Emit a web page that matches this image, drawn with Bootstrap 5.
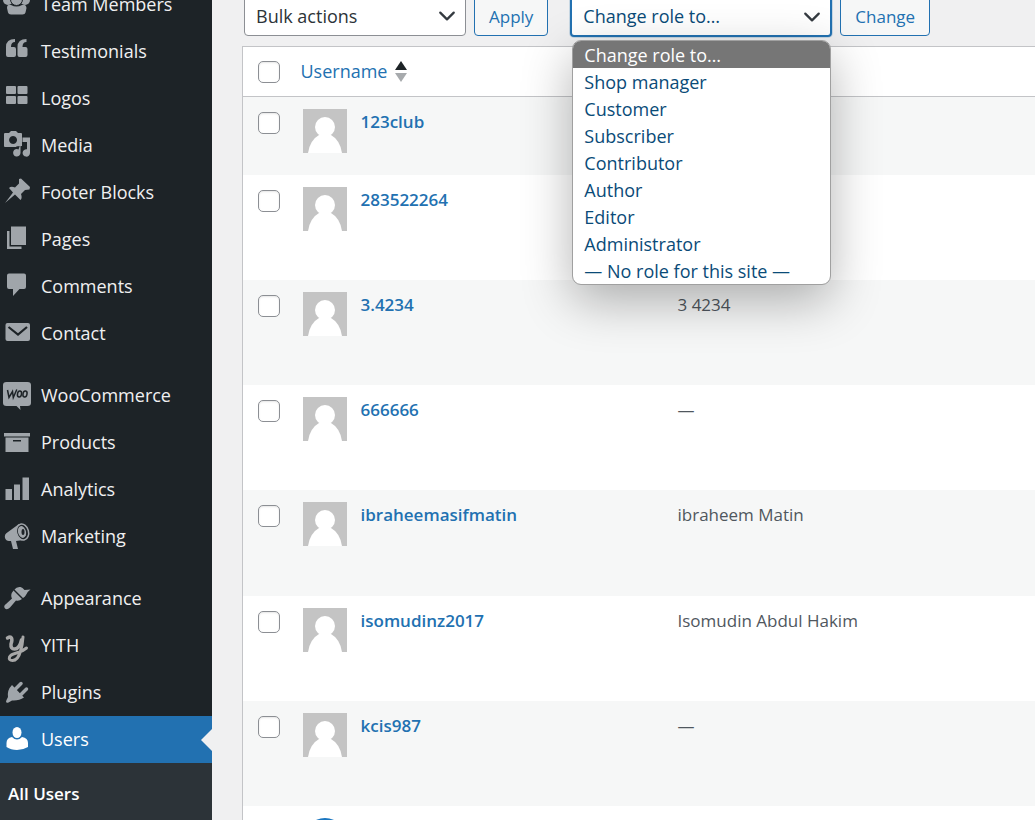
<!DOCTYPE html>
<html lang="en">
<head>
<meta charset="utf-8">
<meta name="viewport" content="width=device-width, initial-scale=1">
<title>Users</title>
<link href="https://cdn.jsdelivr.net/npm/bootstrap@5.3.0/dist/css/bootstrap.min.css" rel="stylesheet">
<style>
  body { font-family: "Open Sans", "Noto Sans", sans-serif; font-size: 17px; line-height: 27px; background: #f0f0f1; color: #50575e; }
  .app-shell { height: 100vh; overflow: hidden; }
  .side-menu { width: 212px; background: #1d2327; font-size: 18px; }
  .side-scroll { margin-top: -19px; min-height: calc(100% + 19px); }
  .side-menu .nav-link { height: 47px; padding: 0 0 0 3px; gap: 10px; color: #f0f0f1; font-size: 18px; }
  .side-menu svg { width: 28px; height: 28px; margin-bottom: 6px; flex: none; fill: #a0a5aa; overflow: visible; }
  .menu-gap { height: 15px; }
  .side-menu .nav-link.active { background: #2271b1; color: #fff; }
  .side-menu .nav-link.active svg { fill: #fff; }
  .nav-link.active::after { content: ""; position: absolute; right: 0; top: 13px; border: 11px solid transparent; border-left: 0; border-right-color: #f0f0f1; }
  .sub-menu { background: #2c3338; padding: 17px 8px; font-size: 17px; }
  .sub-menu a { color: #fff; font-weight: 600; text-decoration: none; }
  .page-main { padding-left: 30px; }
  .tool-row { margin-top: -4px; padding-left: 2px; gap: 8px; }
  .tool-row .form-select { height: 40px; padding: 0 44px 0 11px; border-color: #8c8f94; border-radius: 4px; color: #2c3338; font-size: 18px; background-position: right 9px center; background-size: 18px 18px; }
  .bulk-pick { width: 222px; }
  .role-pick { width: 262px; margin-left: 14px; }
  .tool-row .role-pick .form-select { height: 41px; border: 2px solid #2271b1; color: #0a4b78; box-shadow: 0 0 0 1px #2271b133; }
  .btn-wp { height: 40px; padding: 0 14px; border: 1px solid #2271b1; border-radius: 4px; background: #f6f7f7; color: #2271b1; font-size: 17px; }
  .role-pick .dropdown-menu { display: block; top: 44px; left: 2px; width: 259px; padding: 0; overflow: hidden; border: 1px solid #a0a0a0; border-radius: 9px; box-shadow: 0 16px 50px rgba(0,0,0,.3); font-size: 18px; }
  .role-pick .dropdown-item { height: 27px; padding: 0 11px; line-height: 28px; color: #0a4b78; }
  .role-pick .dropdown-item.active { background: #767676; color: #fff; }
  .user-table { margin: 9px 0 0; border: 1px solid #c3c4c7; border-right: 0; table-layout: fixed; color: #50575e; background: #fff; }
  .user-table > :not(caption) > * > * { padding: 0 0 0 10px; border: 0; background: transparent; color: inherit; box-shadow: none; font-weight: 400; }
  .user-table thead tr { height: 50px; border-bottom: 1px solid #c3c4c7; font-size: 18px; }
  .user-table tbody tr { height: 105px; }
  .user-table tbody tr:nth-child(5) { height: 106px; }
  .user-table tbody tr.short-row { height: 78px; }
  .user-table tbody tr:nth-child(odd) { background: #f6f7f7; }
  .user-table tbody > tr > td { padding-top: 11px; }
  .col-pick { width: 50px; }
  .col-user { width: 375px; }
  .user-table .form-check-input { display: block; width: 22px; height: 22px; margin: 0 0 0 5px; border: 1px solid #8c8f94; border-radius: 5px; background-color: #fff; box-shadow: inset 0 1px 2px rgba(0,0,0,.1); }
  .user-table tbody .form-check-input { margin-top: 4px; }
  .user-table a { color: #2271b1; text-decoration: none; }
  .user-cell { gap: 14px; }
  .user-link { font-weight: 600; }
  .avatar-pic { width: 44px; height: 44px; flex: none; margin-top: 1px; }
  .sort-link { gap: 8px; margin-left: -2px; }
</style>
</head>
<body>
<div class="app-shell d-flex">
  <nav class="side-menu flex-shrink-0" aria-label="Admin menu">
    <div class="side-scroll nav flex-column flex-nowrap">
      <a class="nav-link d-flex align-items-center" href="#"><svg viewBox="0 0 28 28"><circle cx="5" cy="12" r="5"/><circle cx="22" cy="12" r="5"/><circle cx="13.500" cy="11.500" r="6" stroke="#1d2327"/><path d="M4 20q0-4 4-3 5.500 3 11 0 4-1 4.500 3l-1 4.500q-.5 2-3 2H8q-2.500 0-3-2z"/></svg>Team Members</a>
      <a class="nav-link d-flex align-items-center" href="#"><svg viewBox="0 0 28 28"><path d="M12 4v3q-4 0-4 5h3q2 0 2 2v6q0 2-2 2H5q-2 0-2-2v-8q0-8 9-8zM23.500 4v3q-4 0-4 5h3q2 0 2 2v6q0 2-2 2h-6q-2 0-2-2v-8q0-8 9-8z"/></svg>Testimonials</a>
      <a class="nav-link d-flex align-items-center" href="#"><svg viewBox="0 0 28 28"><rect x="3" y="4" width="10" height="8" rx="1"/><rect x="14.500" y="4" width="10" height="8" rx="1"/><rect x="3" y="14" width="10" height="8" rx="1"/><rect x="14.500" y="14" width="10" height="8" rx="1"/></svg>Logos</a>
      <a class="nav-link d-flex align-items-center" href="#"><svg viewBox="0 0 28 28"><path fill-rule="evenodd" d="M2 4h4l2-2h5l2 2h3q1 0 1 1v12q-6 0-6 1H2q-1 0-1-1V5q0-1 1-1zm8 3a4 4 0 1 0 .1 0z"/><path d="M19.500 8.500H27V24a3.700 3.700 0 1 1-3-3.700V13h-4.500zM17.500 15v9a3.700 3.700 0 1 1-2-3.500z"/></svg>Media</a>
      <a class="nav-link d-flex align-items-center" href="#"><svg viewBox="0 0 28 28"><path d="M16 3l2-.5 9 8.500-.5 2.500-4.500.5-4 4q1.500 4-.5 6L12 18.500 2 27l8-10.500-4-4.500q2-2 6-.5l4-4z"/></svg>Footer Blocks</a>
      <a class="nav-link d-flex align-items-center" href="#"><svg viewBox="0 0 28 28"><path d="M8 3.500h15V22H8zM4 8h2.500v15.500H18.500V26H4z"/></svg>Pages</a>
      <a class="nav-link d-flex align-items-center" href="#"><svg viewBox="0 0 28 28"><path d="M6 3.500h15q2 0 2 2V17q0 2-2 2h-4.500L10 26v-7H6q-2 0-2-2V5.500q0-2 2-2z"/></svg>Comments</a>
      <a class="nav-link d-flex align-items-center" href="#"><svg viewBox="0 0 28 28"><rect x="2.500" y="6" width="24.500" height="18" rx="2"/><path d="M5.500 10l9.500 7.500 9-7.500" fill="none" stroke="#1d2327" stroke-width="2.200"/></svg>Contact</a>
      <div class="menu-gap"></div>
      <a class="nav-link d-flex align-items-center" href="#"><svg viewBox="0 0 28 28"><path d="M3.500 3H24.500Q28 3 28 6V24Q28 27 24.500 27H17l.5 4-4-4h-10Q0 27 0 24V6Q0 3 3.500 3z"/><path d="M4.500 11l1.500 7.500 3.500-6 .8 6 3.500-8" fill="none" stroke="#1d2327" stroke-width="1.500"/><g fill="none" stroke="#1d2327" stroke-width="1.500"><ellipse cx="16.500" cy="15" rx="2" ry="3" transform="rotate(12 16.500 15)"/><ellipse cx="22" cy="15" rx="2" ry="3" transform="rotate(12 22 15)"/></g></svg>WooCommerce</a>
      <a class="nav-link d-flex align-items-center" href="#"><svg viewBox="0 0 28 28"><path fill-rule="evenodd" d="M1 7h26v3.500H1zM2.500 11.500h23V26h-23zM10 14v1.500h8V14z"/></svg>Products</a>
      <a class="nav-link d-flex align-items-center" href="#"><svg viewBox="0 0 28 28"><path d="M2.500 16H9v11H2.500zM11 11.500h6V27h-6zM19.500 4.500H26V27h-6.500z"/></svg>Analytics</a>
      <a class="nav-link d-flex align-items-center" href="#"><svg viewBox="0 0 28 28"><path d="M16 4L5 12q-4 2-3 6 1 3 4 3h2l2 8h5l-2-8 8-1z"/><ellipse cx="19.500" cy="12" rx="6" ry="8" transform="rotate(-15 19.500 12)" stroke="#a0a5aa" stroke-width="1.500" style="fill:#1d2327"/><ellipse cx="19" cy="12" rx="4" ry="6" transform="rotate(-15 19 12)"/><ellipse cx="20" cy="12" rx="1.500" ry="3" fill="#1d2327"/></svg>Marketing</a>
      <div class="menu-gap"></div>
      <a class="nav-link d-flex align-items-center" href="#"><svg viewBox="0 0 28 28"><path d="M11.500 7.500q2-3 6-2.500 2 .5 4 3l6-.5q-3 2-4.500 5.500-1 2-3 3z"/><path d="M10.500 8.500l8.500 8.500q-3 2.500-6 1.500l-6 7q-3 3-5 1-2-2.500 1-4.500l6-5.500q-2-4 1.500-8z"/></svg>Appearance</a>
      <a class="nav-link d-flex align-items-center" href="#"><svg viewBox="0 0 28 28"><g fill="none" stroke="#a7a7a7" stroke-linecap="round" stroke-linejoin="round"><path d="M4.500 9q3-2 4 0 1 2-.5 6-.5 5 3.500 5 5 0 7-9" stroke-width="3.500"/><path d="M20 8q-.5 8-2.500 14-2.500 9.500-8 9.500-4 0-3-3.500 1-2.500 7-4 6-1.500 10-5" stroke-width="3"/></g></svg>YITH</a>
      <a class="nav-link d-flex align-items-center" href="#"><svg viewBox="0 0 28 28"><path d="M9 9l12 12.500q-5 3.500-12 3L5.500 26.500Q2 27.500 3.500 24L5 21Q4 14 9 9z"/><path d="M12.500 13L18 7.500M18 18.500l5.500-5.500" stroke="#a0a5aa" stroke-width="3.500" stroke-linecap="round"/></svg>Plugins</a>
      <a class="nav-link active position-relative d-flex align-items-center" href="#" aria-current="page"><svg viewBox="0 0 28 28"><ellipse cx="14" cy="9.500" rx="4.500" ry="5.500"/><path d="M9 14q5 5 10 0 6 1 6 6v4q-5 3-11 3t-10.500-3v-4q0-5 5.500-6z"/></svg>Users</a>
      <div class="sub-menu flex-grow-1"><a href="#">All Users</a></div>
    </div>
  </nav>

  <main class="page-main flex-grow-1">
    <div class="tool-row d-flex">
      <div class="bulk-pick"><select class="form-select" aria-label="Bulk actions"><option>Bulk actions</option></select></div>
      <button class="btn-wp" type="button">Apply</button>
      <div class="role-pick position-relative">
        <select class="form-select" aria-label="Change role to"><option>Change role to…</option></select>
        <div class="dropdown-menu show">
          <button class="dropdown-item active" type="button">Change role to…</button>
          <button class="dropdown-item" type="button">Shop manager</button>
          <button class="dropdown-item" type="button">Customer</button>
          <button class="dropdown-item" type="button">Subscriber</button>
          <button class="dropdown-item" type="button">Contributor</button>
          <button class="dropdown-item" type="button">Author</button>
          <button class="dropdown-item" type="button">Editor</button>
          <button class="dropdown-item" type="button">Administrator</button>
          <button class="dropdown-item" type="button">— No role for this site —</button>
        </div>
      </div>
      <button class="btn-wp" type="button">Change</button>
    </div>

    <svg class="d-none"><symbol id="person" viewBox="0 0 44 44"><path fill="#c4c4c4" d="M0 0h44v44H0z"/><ellipse cx="22" cy="18" rx="10" ry="10" fill="#fff"/><path fill="#fff" d="M5 44Q7 31 16 26h12q9 5 11 18z"/></symbol></svg>

    <table class="table user-table align-top">
      <colgroup><col class="col-pick"><col class="col-user"><col></colgroup>
      <thead>
        <tr class="align-middle">
          <td><input class="form-check-input" type="checkbox" aria-label="Select all"></td>
          <th scope="col"><a class="sort-link d-inline-flex align-items-center" href="#">Username <svg width="12" height="22" viewBox="0 0 12 22"><path fill="#1d2327" d="M6 0l6 9H0z"/><path fill="#a7aaad" d="M0 12h12l-6 9z"/></svg></a></th>
          <th scope="col"></th>
        </tr>
      </thead>
      <tbody>
        <tr class="short-row"><td><input class="form-check-input" type="checkbox" aria-label="Select 123club"></td><td><div class="user-cell d-flex"><svg class="avatar-pic"><use href="#person"/></svg><a class="user-link" href="#">123club</a></div></td><td></td></tr>
        <tr><td><input class="form-check-input" type="checkbox" aria-label="Select 283522264"></td><td><div class="user-cell d-flex"><svg class="avatar-pic"><use href="#person"/></svg><a class="user-link" href="#">283522264</a></div></td><td></td></tr>
        <tr><td><input class="form-check-input" type="checkbox" aria-label="Select 3.4234"></td><td><div class="user-cell d-flex"><svg class="avatar-pic"><use href="#person"/></svg><a class="user-link" href="#">3.4234</a></div></td><td>3 4234</td></tr>
        <tr><td><input class="form-check-input" type="checkbox" aria-label="Select 666666"></td><td><div class="user-cell d-flex"><svg class="avatar-pic"><use href="#person"/></svg><a class="user-link" href="#">666666</a></div></td><td>—</td></tr>
        <tr><td><input class="form-check-input" type="checkbox" aria-label="Select ibraheemasifmatin"></td><td><div class="user-cell d-flex"><svg class="avatar-pic"><use href="#person"/></svg><a class="user-link" href="#">ibraheemasifmatin</a></div></td><td>ibraheem Matin</td></tr>
        <tr><td><input class="form-check-input" type="checkbox" aria-label="Select isomudinz2017"></td><td><div class="user-cell d-flex"><svg class="avatar-pic"><use href="#person"/></svg><a class="user-link" href="#">isomudinz2017</a></div></td><td>Isomudin Abdul Hakim</td></tr>
        <tr><td><input class="form-check-input" type="checkbox" aria-label="Select kcis987"></td><td><div class="user-cell d-flex"><svg class="avatar-pic"><use href="#person"/></svg><a class="user-link" href="#">kcis987</a></div></td><td>—</td></tr>
        <tr><td></td><td><svg class="avatar-pic" viewBox="0 0 44 44"><circle cx="22" cy="22" r="22" fill="#1a76c0"/></svg></td><td></td></tr>
      </tbody>
    </table>
  </main>
</div>
<script src="https://cdn.jsdelivr.net/npm/bootstrap@5.3.0/dist/js/bootstrap.bundle.min.js"></script>
</body>
</html>
